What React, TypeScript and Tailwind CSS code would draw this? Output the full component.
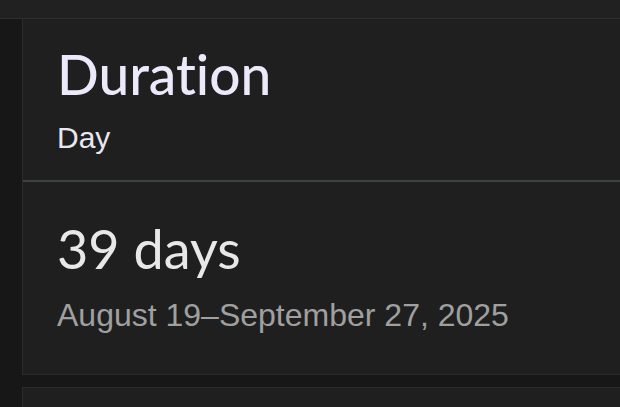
import React from "react";

export default function App() {
  return (
    <div className="w-[620px] h-[407px] overflow-hidden bg-[#212121] flex flex-col">
      <div className="h-[18px] shrink-0 bg-[#212121]" />
      <div className="h-px shrink-0 bg-[#2a3030]" />
      <div className="flex flex-1 min-h-0">
        <div className="w-[22px] shrink-0 bg-[#171717]" />
        <div className="flex-1 flex flex-col bg-[#171717]">
          <div className="flex flex-col bg-[#1f1f1f] border-l border-[#2a2c2c]">
            <div className="h-[161px] pl-[34px] pt-[27px]">
              <div
                className="text-[55px] leading-[56px] font-medium text-[#ece9fa] [font-variant-ligatures:none]"
                style={{ fontFamily: "Lato, sans-serif" }}
              >
                Duration
              </div>
              <div
                className="mt-[20px] text-[30px] leading-[32px] text-[#e9e7f2]"
                style={{ fontFamily: "'Liberation Sans', Arial, sans-serif" }}
              >
                Day
              </div>
            </div>
            <div className="h-[2px] bg-[#3a4444]" />
            <div className="h-[192px] pl-[34px] pt-[40px]">
              <div
                className="text-[54px] leading-[54px] text-[#e8e8e8] [font-variant-ligatures:none]"
                style={{ fontFamily: "Lato, sans-serif" }}
              >
                39 days
              </div>
              <div
                className="mt-[21px] text-[32px] leading-[36px] text-[#a0a0a0]"
                style={{ fontFamily: "'Liberation Sans', Arial, sans-serif" }}
              >
                August 19–September 27, 2025
              </div>
            </div>
            <div className="h-px bg-[#262b2b]" />
          </div>
          <div className="h-[12px] shrink-0" />
          <div className="flex-1 bg-[#1f1f1f] border-l border-t border-[#2a2c2c]" />
        </div>
      </div>
    </div>
  );
}
